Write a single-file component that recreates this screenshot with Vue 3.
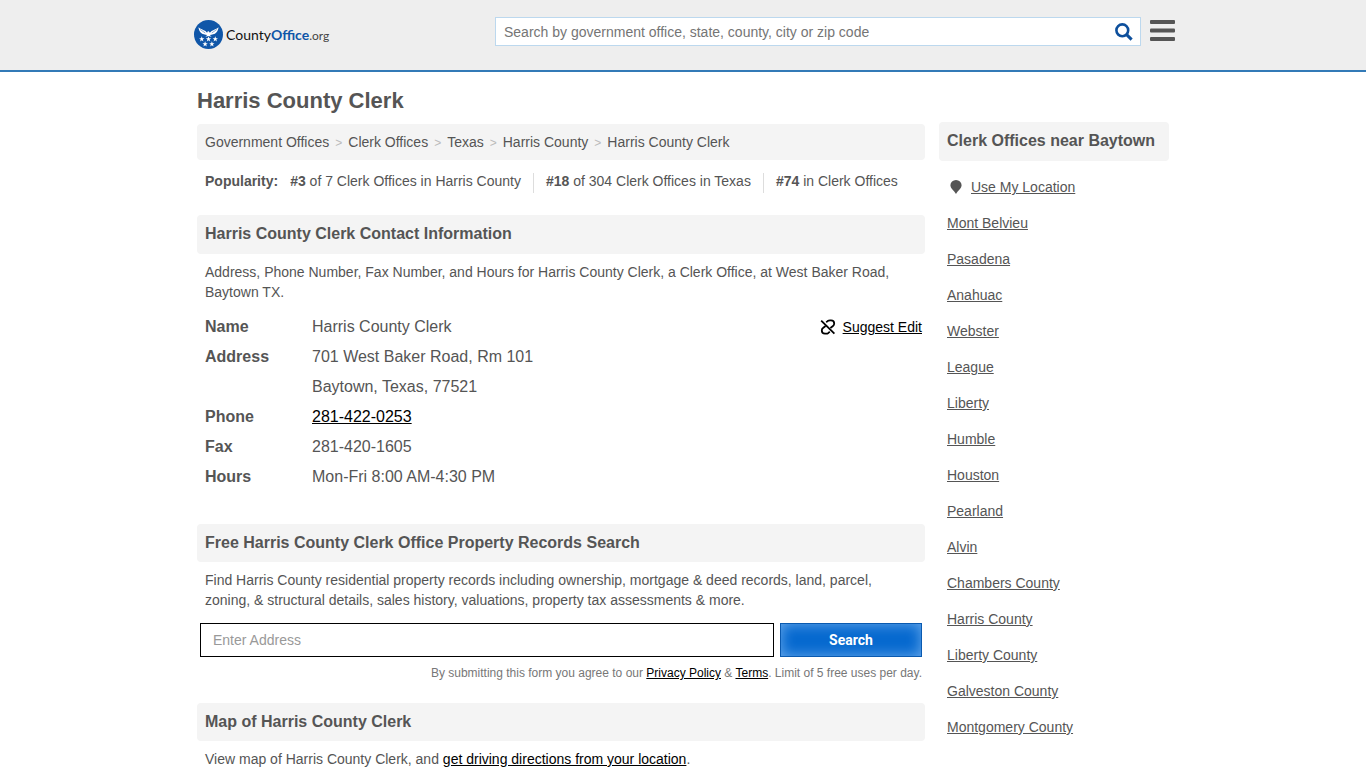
<template>
  <div class="page">
    <header class="site-header">
      <div class="header-inner">
        <a class="logo" href="#" aria-label="CountyOffice.org">
          <svg class="logo-mark" viewBox="0 0 30 30" aria-hidden="true">
            <circle cx="15" cy="15" r="15" fill="#0f56a8" />
            <path
              d="M4.6 7.4C6.6 9.4 9.6 9.8 11.8 11.4L13.6 13.2L14 12L15.2 11.6L16.4 13.2L18.2 11.4C20.4 9.8 23.4 9.4 25.4 7.4C25.2 10 23.8 12.6 21.6 14.2L18 15.2L16.4 15.4L18.2 17.2L15 16.6L11.8 17.2L13.6 15.4L12 15.2L8.4 14.2C6.2 12.6 4.8 10 4.6 7.4Z"
              fill="#fff"
            />
            <path d="M6.4 9.8L11.6 13.4M23.6 9.8L18.4 13.4" stroke="#0f56a8" stroke-width="0.5" />
            <path
              v-for="(star, i) in stars"
              :key="i"
              :transform="`translate(${star[0]} ${star[1]}) scale(1.25)`"
              d="M0-2.3L.6-.7L2.2-.7L.9.4L1.4 2L0 1L-1.4 2L-.9.4L-2.2-.7L-.6-.7Z"
              fill="#fff"
            />
          </svg>
          <span class="logo-text">County<b>Office</b><span class="tld">.org</span></span>
        </a>
        <form class="site-search" role="search" @submit.prevent>
          <input
            v-model="query"
            type="text"
            aria-label="Search"
            placeholder="Search by government office, state, county, city or zip code"
          />
          <button type="submit" aria-label="Search">
            <svg width="18" height="18" viewBox="0 0 18 18" fill="none" stroke="#0d4f9c">
              <circle cx="7.3" cy="7.3" r="5.9" stroke-width="2.6" />
              <path d="M11.6 11.6L16.6 16.6" stroke-width="3" />
            </svg>
          </button>
        </form>
        <button class="menu" type="button" aria-label="Menu">
          <svg width="25" height="22" viewBox="0 0 25 22" fill="#555">
            <rect width="25" height="4" rx="1" />
            <rect y="8.5" width="25" height="4" rx="1" />
            <rect y="17" width="25" height="4" rx="1" />
          </svg>
        </button>
      </div>
    </header>

    <div class="container">
      <h1>Harris County Clerk</h1>
      <div class="columns">
        <main>
          <nav class="breadcrumb" aria-label="Breadcrumb">
            <template v-for="(crumb, i) in crumbs" :key="crumb">
              <span v-if="i" class="sep">&gt;</span>
              <a href="#">{{ crumb }}</a>
            </template>
          </nav>
          <div class="popularity">
            <strong>Popularity:</strong>
            <ul>
              <li v-for="rank in ranks" :key="rank.place">
                <strong>{{ rank.place }}</strong> {{ rank.text }}
              </li>
            </ul>
          </div>

          <section class="contact">
            <h2>Harris County Clerk Contact Information</h2>
            <p>
              Address, Phone Number, Fax Number, and Hours for Harris County Clerk, a Clerk Office,
              at West Baker Road, Baytown TX.
            </p>
            <div class="contact-body">
              <table>
                <tbody>
                  <tr><th scope="row">Name</th><td>Harris County Clerk</td></tr>
                  <tr>
                    <th scope="row">Address</th>
                    <td>701 West Baker Road, Rm 101<br />Baytown, Texas, 77521</td>
                  </tr>
                  <tr><th scope="row">Phone</th><td><a href="tel:2814220253">281-422-0253</a></td></tr>
                  <tr><th scope="row">Fax</th><td>281-420-1605</td></tr>
                  <tr><th scope="row">Hours</th><td>Mon-Fri 8:00 AM-4:30 PM</td></tr>
                </tbody>
              </table>
              <div class="suggest">
                <svg width="16" height="16" viewBox="0 0 16 16" fill="none" stroke="#000" stroke-width="1.8" aria-hidden="true">
                  <path d="M1.2 1.6L14.4 14.6" />
                  <path d="M6.2 3.2L7.6 2.1Q8.6 1.4 10 1.4H11A3.2 3.2 0 0 1 14.2 4.6Q14.2 6.2 13 7L10.4 9" />
                  <path d="M9.8 12.8L8.4 13.9Q7.4 14.6 6 14.6H5A3.2 3.2 0 0 1 1.8 11.4Q1.8 9.8 3 9L5.6 7" />
                </svg>
                <a href="#">Suggest Edit</a>
              </div>
            </div>
          </section>

          <section class="records">
            <h2>Free Harris County Clerk Office Property Records Search</h2>
            <p>
              Find Harris County residential property records including ownership, mortgage &amp; deed
              records, land, parcel, zoning, &amp; structural details, sales history, valuations,
              property tax assessments &amp; more.
            </p>
            <form class="address-form" @submit.prevent>
              <input v-model="address" type="text" aria-label="Enter Address" placeholder="Enter Address" />
              <button type="submit">Search</button>
            </form>
            <div class="terms">
              By submitting this form you agree to our <a href="#">Privacy Policy</a> &amp;
              <a href="#">Terms</a>. Limit of 5 free uses per day.
            </div>
          </section>

          <section>
            <h2>Map of Harris County Clerk</h2>
            <p>View map of Harris County Clerk, and <a href="#">get driving directions from your location</a>.</p>
          </section>
        </main>

        <aside>
          <h2>Clerk Offices near Baytown</h2>
          <ul>
            <li class="locate">
              <svg width="12" height="14" viewBox="0 0 12 14" fill="#555" aria-hidden="true">
                <path d="M6 0A5.6 5.3 0 0 1 11.6 5.3C11.6 8.3 8 10.6 6 14C4 10.6.4 8.3.4 5.3A5.6 5.3 0 0 1 6 0Z" />
              </svg>
              <a href="#">Use My Location</a>
            </li>
            <li v-for="place in places" :key="place"><a href="#">{{ place }}</a></li>
          </ul>
        </aside>
      </div>
    </div>
  </div>
</template>

<script setup>
import { ref } from 'vue'

const query = ref('')
const address = ref('')

const stars = [[8, 19.8], [15, 19.8], [22, 19.8], [11.5, 24.8], [18.5, 24.8]]

const crumbs = ['Government Offices', 'Clerk Offices', 'Texas', 'Harris County', 'Harris County Clerk']

const ranks = [
  { place: '#3', text: 'of 7 Clerk Offices in Harris County' },
  { place: '#18', text: 'of 304 Clerk Offices in Texas' },
  { place: '#74', text: 'in Clerk Offices' }
]

const places = [
  'Mont Belvieu',
  'Pasadena',
  'Anahuac',
  'Webster',
  'League',
  'Liberty',
  'Humble',
  'Houston',
  'Pearland',
  'Alvin',
  'Chambers County',
  'Harris County',
  'Liberty County',
  'Galveston County',
  'Montgomery County'
]
</script>

<style>
body {
  margin: 0;
  background: #fff;
}
</style>

<style scoped>
.page,
.page input,
.page button {
  font-family: "Liberation Sans", Arial, sans-serif;
  font-size: 14px;
}

.page {
  color: #555;
  line-height: 20px;
}

.page * {
  box-sizing: border-box;
}

ul {
  margin: 0;
  padding: 0;
  list-style: none;
}

.site-header {
  background: #eee;
  border-bottom: 2px solid #337ab7;
}

.header-inner {
  display: flex;
  align-items: flex-start;
  max-width: 984px;
  height: 70px;
  margin: 0 auto;
  padding-top: 17px;
}

.logo {
  display: flex;
  align-items: center;
  gap: 3px;
  width: 304px;
  padding: 3px 0 0 3px;
  color: #111;
  text-decoration: none;
}

.logo-mark {
  width: 29px;
  height: 29px;
}

.logo-text {
  padding-top: 2px;
  font-family: Lato, sans-serif;
  font-size: 14px;
}

.logo-text b {
  color: #0f56a8;
}

.logo-text .tld {
  font-size: 12px;
  color: #444;
}

.site-search {
  display: flex;
  flex: 1;
  height: 29px;
  background: #fff;
  border: 1px solid #bcd8ee;
}

.site-search input {
  flex: 1;
  min-width: 0;
  padding: 0 8px;
  border: 0;
  background: none;
  outline: none;
}

.site-search input::placeholder {
  color: #757575;
}

.site-search button,
.menu {
  display: flex;
  padding: 0;
  border: 0;
  background: none;
  cursor: pointer;
}

.site-search button {
  align-items: center;
  padding-right: 7px;
}

.menu {
  margin-left: 9px;
  padding-top: 3px;
}

.container {
  max-width: 972px;
  margin: 0 auto;
}

h1 {
  margin: 0;
  padding: 17px 0 11px;
  font-size: 22px;
  line-height: 24px;
}

.columns {
  display: flex;
  align-items: flex-start;
  gap: 14px;
}

main {
  flex: 1;
  min-width: 0;
}

aside {
  width: 230px;
  margin-top: -2px;
}

h2 {
  margin: 0;
  padding: 9px 8px;
  background: #f4f4f4;
  border-radius: 4px;
  font-size: 16px;
  line-height: 20px;
}

.contact h2,
aside h2 {
  padding-bottom: 10px;
}

p {
  margin: 0;
  padding: 8px 8px 0;
}

main p a,
.terms a,
.contact-body a {
  color: #000;
}

.breadcrumb {
  padding: 8px;
  background: #f4f4f4;
  border-radius: 4px;
}

.breadcrumb a {
  color: #555;
  text-decoration: none;
}

.breadcrumb .sep {
  padding: 0 6px;
  color: #bbb;
  font-size: 12px;
  line-height: 12px;
}

.popularity {
  display: flex;
  gap: 12px;
  padding: 13px 8px 22px;
  line-height: 16px;
}

.popularity ul {
  display: flex;
}

.popularity li {
  padding-bottom: 4px;
}

.popularity li + li {
  margin-left: 12px;
  padding-left: 12px;
  border-left: 1px solid #ddd;
}

.contact {
  padding-bottom: 32px;
}

.contact-body {
  display: flex;
  justify-content: space-between;
  padding: 10px 3px 0 8px;
}

.contact table {
  border-collapse: collapse;
  font-size: 16px;
  line-height: 30px;
}

.contact th {
  width: 107px;
  padding: 0;
  text-align: left;
  vertical-align: top;
}

.contact td {
  padding: 0;
}

.suggest {
  display: flex;
  align-items: center;
  gap: 7px;
  height: 30px;
}

.records {
  padding-bottom: 20px;
}

.address-form {
  display: flex;
  gap: 6px;
  padding: 13px 3px 6px;
}

.address-form input {
  flex: 1;
  min-width: 0;
  height: 34px;
  padding: 0 12px;
  border: 1px solid #000;
  background: #fff;
}

.address-form input::placeholder {
  color: #999;
}

.address-form button {
  width: 142px;
  height: 34px;
  padding: 0;
  border: 1px solid #0a5ab0;
  background: #0669cf;
  box-shadow: inset 0 0 14px #6aaaec;
  color: #fff;
  font-family: Roboto, sans-serif;
  font-weight: bold;
}

.terms {
  padding-right: 3px;
  color: #777;
  font-size: 12px;
  text-align: right;
}

aside ul {
  padding: 8px 8px 0;
}

aside li {
  height: 36px;
  line-height: 36px;
}

aside a {
  color: #555;
}

.locate {
  display: flex;
  align-items: center;
  gap: 9px;
  padding-left: 3px;
}

@media (max-width: 980px) {
  .header-inner {
    padding-right: 12px;
    padding-left: 12px;
  }

  .container {
    padding: 0 12px;
  }

  .popularity,
  .popularity ul {
    flex-wrap: wrap;
  }
}

@media (max-width: 760px) {
  .logo {
    width: 150px;
  }

  .columns {
    flex-direction: column;
    align-items: stretch;
  }

  aside {
    width: auto;
    margin-top: 0;
  }
}
</style>
